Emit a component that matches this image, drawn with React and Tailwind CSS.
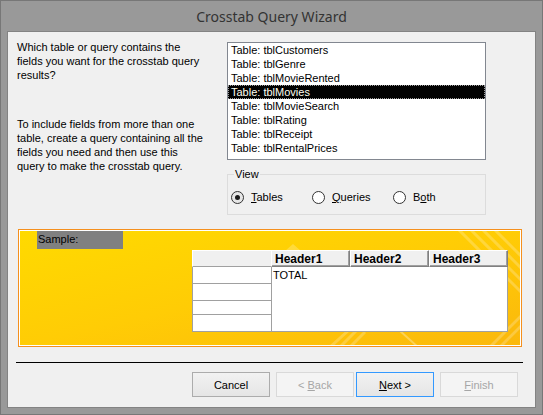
import React from 'react';

const TABLES = [
  'tblCustomers',
  'tblGenre',
  'tblMovieRented',
  'tblMovies',
  'tblMovieSearch',
  'tblRating',
  'tblReceipt',
  'tblRentalPrices',
];

function Radio({ checked, children }) {
  return (
    <div className="flex items-center w-[81px]">
      <span
        className={`flex items-center justify-center w-[13px] h-[13px] rounded-full border border-[#333] ${
          checked ? 'bg-[#e6e6e6]' : 'bg-white'
        }`}
      >
        {checked && <span className="w-[5px] h-[5px] rounded-full bg-[#1a1a1a]" />}
      </span>
      <span className="ml-[7px] leading-[14px]">{children}</span>
    </div>
  );
}

function Button({ children, disabled, primary, gap }) {
  const base = 'flex items-center justify-center w-[78px] h-[25px] border leading-[14px]';
  let look = 'border-[#acacac] bg-gradient-to-b from-[#f2f2f2] to-[#e5e5e5] text-black';
  if (primary) look = 'border-[#3399ff] bg-gradient-to-b from-[#f2f2f2] to-[#e5e5e5] text-black';
  if (disabled) look = 'border-[#d9d9d9] bg-[#f4f4f4] text-[#a6a6a6]';
  return <div className={`${base} ${look} ${gap}`}>{children}</div>;
}

function HeaderCell({ w, children }) {
  return (
    <div
      className={`${w} h-[17px] flex items-center pl-[3px] bg-[#f0f0f0] border-t border-l border-white border-r border-b border-r-[#808080] border-b-[#808080] shadow-[inset_-1px_-1px_0_#a0a0a0] font-bold text-[12px]`}
    >
      {children}
    </div>
  );
}

export default function App() {
  return (
    <div
      className="w-[543px] h-[415px] bg-[#999999] border border-[#777] flex flex-col px-[6px] pb-[6px] text-[11px] text-black"
      style={{ fontFamily: '"Liberation Sans", Arial, sans-serif' }}
    >
      <div
        className="h-[30px] flex items-center justify-center text-[14px] text-[#333] pt-[1px]"
        style={{ fontFamily: '"Noto Sans", "Open Sans", sans-serif' }}
      >
        Crosstab Query Wizard
      </div>

      <div className="flex-1 flex flex-col bg-[#f0f0f0] border border-[#838383]">
        <div className="flex mt-[8px]">
          <div className="w-[219px] pl-[9px] leading-[14px] whitespace-nowrap">
            <p>Which table or query contains the</p>
            <p>fields you want for the crosstab query</p>
            <p>results?</p>
            <p className="mt-[35px]">To include fields from more than one</p>
            <p>table, create a query containing all the</p>
            <p>fields you need and then use this</p>
            <p>query to make the crosstab query.</p>
          </div>

          <div className="flex flex-col mt-[2px]">
            <div className="w-[259px] h-[118px] border border-[#828790] bg-white flex flex-col">
              {TABLES.map((t) => (
                <div
                  key={t}
                  className={`h-[14px] leading-[14px] pl-[3px] whitespace-nowrap ${
                    t === 'tblMovies'
                      ? 'bg-black text-[#fffff0] outline outline-1 outline-dotted outline-[#9a9a9a] -outline-offset-1'
                      : ''
                  }`}
                >
                  Table: {t}
                </div>
              ))}
            </div>

            <div className="relative mt-[14px] w-[259px] h-[41px] border border-[#dcdcdc]">
              <span className="absolute left-[6px] -top-[8px] px-[1px] bg-[#f0f0f0] leading-[14px]">View</span>
              <div className="flex pl-[3px] pt-[15px]">
                <Radio checked>
                  <span className="underline">T</span>ables
                </Radio>
                <Radio>
                  <span className="underline">Q</span>ueries
                </Radio>
                <Radio>
                  B<span className="underline">o</span>th
                </Radio>
              </div>
            </div>
          </div>
        </div>

        <div className="relative ml-[10px] mt-[14px] w-[504px] h-[118px] border border-[#f5901e] overflow-hidden">
          <div className="w-full h-full border border-white bg-gradient-to-br from-[#ffda00] via-[#ffcc05] to-[#fbb80c] flex flex-col">
            <svg className="absolute inset-0 pointer-events-none" width="504" height="118" viewBox="0 0 504 118">
              <g stroke="#ffffff" strokeOpacity="0.22" strokeWidth="3" fill="none">
                <path d="M258 30 L274 16 L290 30" />
                <path d="M262 30 L274 20 L286 30" />
                <path d="M440 0 L504 64" />
                <path d="M452 0 L504 52" />
                <path d="M464 0 L504 40" />
                <path d="M476 0 L504 28" />
                <path d="M310 118 L330 100" />
                <path d="M320 118 L338 100" />
                <path d="M330 118 L346 102" />
                <path d="M470 118 L504 84" />
                <path d="M480 118 L504 94" />
              </g>
              <path d="M380 100 L400 118" stroke="#ffffff" strokeOpacity="0.3" strokeWidth="2" />
            </svg>
            <div className="relative ml-[17px] w-[86px] h-[18px] bg-[#808080] pl-[1px] leading-[14px] pt-[1px]">
              Sample:
            </div>
            <div className="relative flex ml-[172px] mt-[1px]">
              <div className="flex flex-col w-[79px]">
                <div className="h-[17px] bg-[#f0f0f0] border-t border-l border-white border-b border-b-[#a0a0a0]" />
                <div className="h-[65px] flex flex-col bg-white border-l border-b border-[#a0a0a0]">
                  <div className="h-[16px]" />
                  <div className="h-[17px] border-t border-[#a0a0a0]" />
                  <div className="h-[14px] border-t border-[#a0a0a0]" />
                  <div className="flex-1 border-t border-[#a0a0a0]" />
                </div>
              </div>
              <div className="flex flex-col w-[237px]">
                <div className="flex">
                  <HeaderCell w="w-[79px]">Header1</HeaderCell>
                  <HeaderCell w="w-[79px]">Header2</HeaderCell>
                  <HeaderCell w="w-[79px]">Header3</HeaderCell>
                </div>
                <div className="h-[65px] bg-white border-l border-r border-b border-[#a0a0a0] pl-[1px] pt-[1px] leading-[14px]">
                  TOTAL
                </div>
              </div>
            </div>
          </div>
        </div>

        <div className="ml-[8px] mt-[15px] w-[507px] h-px bg-black" />

        <div className="flex mt-[9px] pl-[184px]">
          <Button>Cancel</Button>
          <Button disabled gap="ml-[6px]">
            &lt; <span className="underline ml-[3px]">B</span>ack
          </Button>
          <Button primary gap="ml-[2px]">
            <span className="underline">N</span>ext &gt;
          </Button>
          <Button disabled gap="ml-[6px]">
            <span className="underline">F</span>inish
          </Button>
        </div>
      </div>
    </div>
  );
}
